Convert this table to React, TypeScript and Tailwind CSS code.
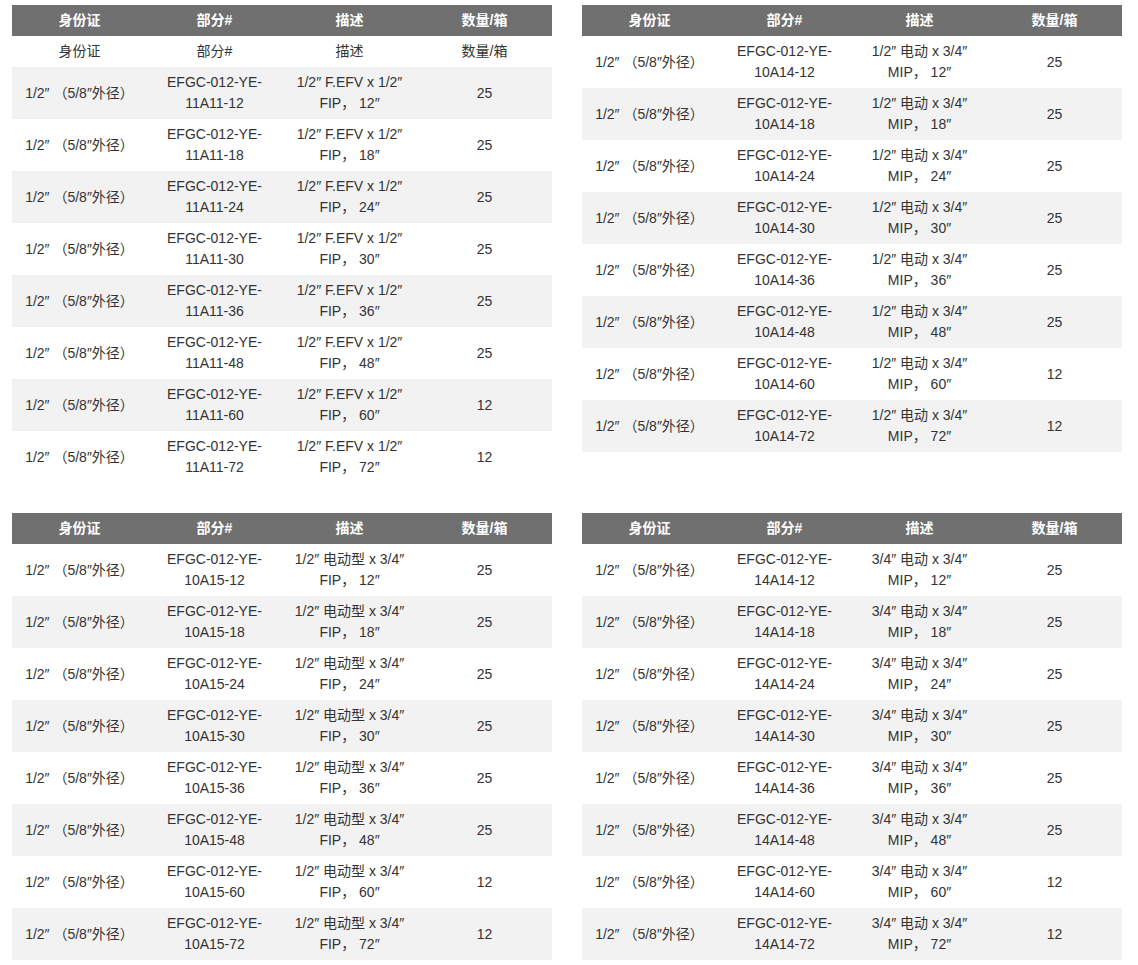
import React from "react";

type Row = { id: string; part: string[]; desc: string[]; qty: string };

const lengths = ["12", "18", "24", "30", "36", "48", "60", "72"];
const ID = "1/2″ （5/8″外径）";

const makeRows = (code: string, descA: string, descB: string): Row[] =>
	lengths.map((l, i) => ({
		id: ID,
		part: ["EFGC-012-YE-", `${code}-${l}`],
		desc: [descA, `${descB}， ${l}″`],
		qty: i < 6 ? "25" : "12",
	}));

const tables = [
	{ sub: true, rows: makeRows("11A11", "1/2″ F.EFV x 1/2″", "FIP") },
	{ sub: false, rows: makeRows("10A14", "1/2″ 电动 x 3/4″", "MIP") },
	{ sub: false, rows: makeRows("10A15", "1/2″ 电动型 x 3/4″", "FIP") },
	{ sub: false, rows: makeRows("14A14", "3/4″ 电动 x 3/4″", "MIP") },
];

const heads = ["身份证", "部分#", "描述", "数量/箱"];

const Lines = ({ lines }: { lines: string[] }) => (
	<>
		{lines.map((t, i) => (
			<div key={i} className="whitespace-nowrap">
				{t}
			</div>
		))}
	</>
);

const SpecTable = ({ sub, rows }: { sub: boolean; rows: Row[] }) => (
	<table className="w-[540px] table-fixed border-collapse text-[14px] text-[#333333]">
		<thead>
			<tr className="h-[31px] bg-[#707070] text-white font-bold">
				{heads.map((h) => (
					<th key={h} className="px-2 text-center font-bold">
						{h}
					</th>
				))}
			</tr>
		</thead>
		<tbody className="[&>tr:nth-child(even)]:bg-[#f2f2f2]">
			{sub && (
				<tr className="h-[31px] bg-white">
					{heads.map((h) => (
						<td key={h} className="px-2 text-center">
							{h}
						</td>
					))}
				</tr>
			)}
			{rows.map((r, i) => (
				<tr key={i} className="h-[52px] leading-[21px]">
					<td className="px-1 py-[5px] text-center whitespace-nowrap">{r.id}</td>
					<td className="px-2 py-[5px] text-center">
						<Lines lines={r.part} />
					</td>
					<td className="px-2 py-[5px] text-center">
						<Lines lines={r.desc} />
					</td>
					<td className="px-2 py-[5px] text-center">{r.qty}</td>
				</tr>
			))}
		</tbody>
	</table>
);

export default function App() {
	return (
		<div
			className="min-h-screen bg-white pl-[12px] pt-[5px]"
			style={{ fontFamily: '"Liberation Sans", Arial, "Noto Sans CJK SC", sans-serif' }}
		>
			<div className="grid grid-cols-[540px_540px] gap-x-[30px] gap-y-[30px] items-start">
				{tables.map((t, i) => (
					<SpecTable key={i} sub={t.sub} rows={t.rows} />
				))}
			</div>
		</div>
	);
}
